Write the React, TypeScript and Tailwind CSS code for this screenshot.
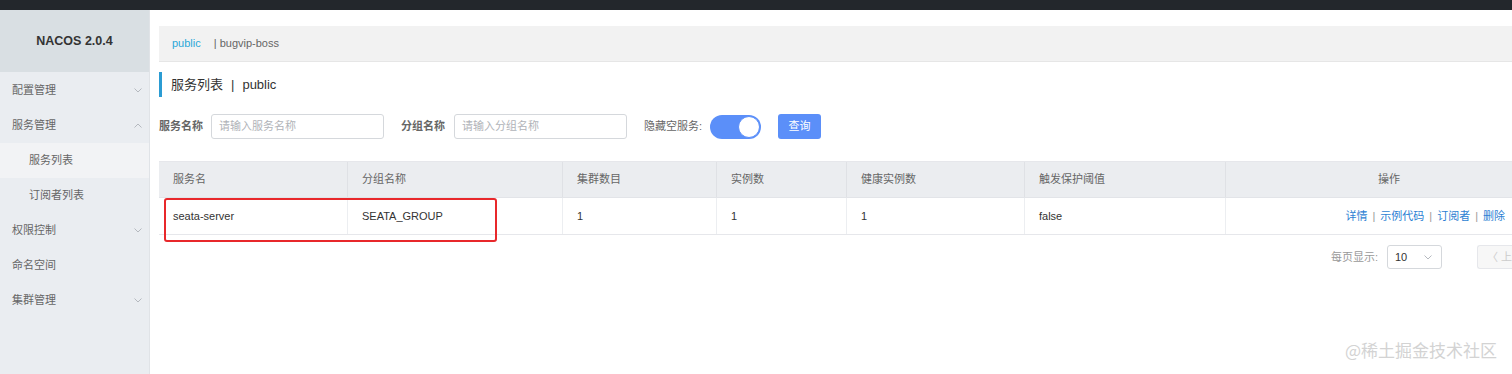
import React from "react";

const Chevron = ({ up }: { up?: boolean }) => (
  <svg width="8" height="5" viewBox="0 0 8 5" className="text-[#b5b9bf]">
    {up ? (
      <path d="M0.5 4.5L4 1L7.5 4.5" fill="none" stroke="currentColor" strokeWidth="1" />
    ) : (
      <path d="M0.5 0.5L4 4L7.5 0.5" fill="none" stroke="currentColor" strokeWidth="1" />
    )}
  </svg>
);

const font = { fontFamily: '"Liberation Sans", "Noto Sans CJK SC", sans-serif' };

export default function App() {
  const menu: { label: string; sub?: boolean; arrow?: "up" | "down"; active?: boolean }[] = [
    { label: "配置管理", arrow: "down" },
    { label: "服务管理", arrow: "up" },
    { label: "服务列表", sub: true, active: true },
    { label: "订阅者列表", sub: true },
    { label: "权限控制", arrow: "down" },
    { label: "命名空间" },
    { label: "集群管理", arrow: "down" },
  ];
  const cols = [
    { label: "服务名", w: "w-[189px]", v: "seata-server" },
    { label: "分组名称", w: "w-[215px]", v: "SEATA_GROUP" },
    { label: "集群数目", w: "w-[154px]", v: "1" },
    { label: "实例数", w: "w-[130px]", v: "1" },
    { label: "健康实例数", w: "w-[178px]", v: "1" },
    { label: "触发保护阈值", w: "w-[201px]", v: "false" },
  ];
  return (
    <div className="w-[1512px] h-[374px] overflow-hidden bg-white flex flex-col text-[11px] text-[#333]" style={font}>
      <div className="h-[10px] bg-[#23272c] shrink-0" />
      <div className="flex flex-1 min-h-0">
        {/* Sidebar */}
        <div className="w-[150px] shrink-0 bg-[#eaedf1] border-r border-[#e0e3e7] flex flex-col">
          <div className="h-[62px] bg-[#d9dfe3] flex items-center justify-center font-bold text-[12.5px] text-[#333]">
            NACOS 2.0.4
          </div>
          <div className="flex flex-col pt-[1px]">
            {menu.map((m) => (
              <div
                key={m.label}
                className={`h-[35px] flex items-center justify-between pr-[7px] ${m.sub ? "pl-[29px]" : "pl-[12px]"} ${m.active ? "bg-[#f2f3f5]" : ""} text-[#666]`}
              >
                <span>{m.label}</span>
                {m.arrow && <Chevron up={m.arrow === "up"} />}
              </div>
            ))}
          </div>
        </div>
        {/* Main */}
        <div className="flex-1 min-w-0 pl-[9px] pt-[16px]">
          <div className="h-[36px] bg-[#f2f2f2] border-b border-[#e6e6e6] flex items-center pl-[13px]">
            <span className="text-[#2aa7d8]">public</span>
            <span className="ml-[13px] text-[#666]">| bugvip-boss</span>
          </div>
          <div className="mt-[10px] h-[25px] border-l-[3px] border-[#2b9cd3] flex items-center pl-[9px] text-[13px] text-[#333]">
            服务列表<span className="mx-[8px]">|</span>public
          </div>
          <div className="mt-[17px] flex items-center h-[25px]">
            <span className="w-[41px] text-[#666] font-bold whitespace-nowrap">服务名称</span>
            <div className="ml-[11px] w-[173px] h-[25px] border border-[#d5d8dc] rounded-[3px] flex items-center pl-[7px] text-[#b0b3b8]">
              请输入服务名称
            </div>
            <span className="ml-[17px] w-[41px] text-[#666] font-bold whitespace-nowrap">分组名称</span>
            <div className="ml-[12px] w-[173px] h-[25px] border border-[#d5d8dc] rounded-[3px] flex items-center pl-[7px] text-[#b0b3b8]">
              请输入分组名称
            </div>
            <span className="ml-[17px] w-[57px] text-[#666] whitespace-nowrap">隐藏空服务:</span>
            <div className="ml-[9px] w-[51px] h-[24px] rounded-full bg-[#5b8ff9] relative">
              <div className="absolute right-[1px] top-[1px] w-[22px] h-[22px] rounded-full bg-white border border-[#5b8ff9]" />
            </div>
            <div className="ml-[17px] w-[43px] h-[25px] rounded-[3px] bg-[#5b8ff9] text-white flex items-center justify-center">
              查询
            </div>
          </div>
          {/* Table */}
          <div className="mt-[22px] border-t border-[#e6e7eb]">
            <div className="flex h-[36px] bg-[#ebedf0] border-b border-[#e2e4e8]">
              {cols.map((c) => (
                <div key={c.label} className={`${c.w} shrink-0 border-r border-[#dfe1e5] flex items-center pl-[14px] text-[#666]`}>
                  {c.label}
                </div>
              ))}
              <div className="flex-1 flex items-center justify-center text-[#666] pl-[40px]">操作</div>
            </div>
            <div className="flex h-[37px] border-b border-[#e6e7eb] relative">
              {cols.map((c) => (
                <div key={c.label} className={`${c.w} shrink-0 border-r border-[#eceef1] flex items-center pl-[14px] text-[#333]`}>
                  {c.v}
                </div>
              ))}
              <div className="flex-1 flex items-center justify-end pr-[7px] text-[#2d7fd3] whitespace-nowrap">
                详情<span className="mx-[5px] text-[#999]">|</span>示例代码<span className="mx-[5px] text-[#999]">|</span>订阅者<span className="mx-[5px] text-[#999]">|</span>删除
              </div>
              <div className="absolute left-[5px] top-[0px] w-[333px] h-[44px] border-2 border-[#e8282b] rounded-[3px]" />
            </div>
          </div>
          <div className="mt-[10px] flex items-center justify-end h-[24px]">
            <span className="text-[#999]">每页显示:</span>
            <div className="ml-[9px] w-[55px] h-[24px] border border-[#d5d8dc] rounded-[3px] flex items-center justify-between pl-[7px] pr-[9px] text-[#333]">
              10
              <Chevron />
            </div>
            <div className="ml-[35px] w-[35px] h-[24px] border border-r-0 border-[#e6e7eb] rounded-l-[3px] bg-[#f7f7f7] flex items-center pl-[9px] text-[#ccc] whitespace-nowrap overflow-hidden">
              〈 上一页
            </div>
          </div>
          <div className="mt-[68px] flex justify-end pr-[15px] text-[17px] text-[#d3d3d3]" style={{ fontFamily: '"Noto Sans CJK SC", sans-serif' }}>
            @稀土掘金技术社区
          </div>
        </div>
      </div>
    </div>
  );
}
